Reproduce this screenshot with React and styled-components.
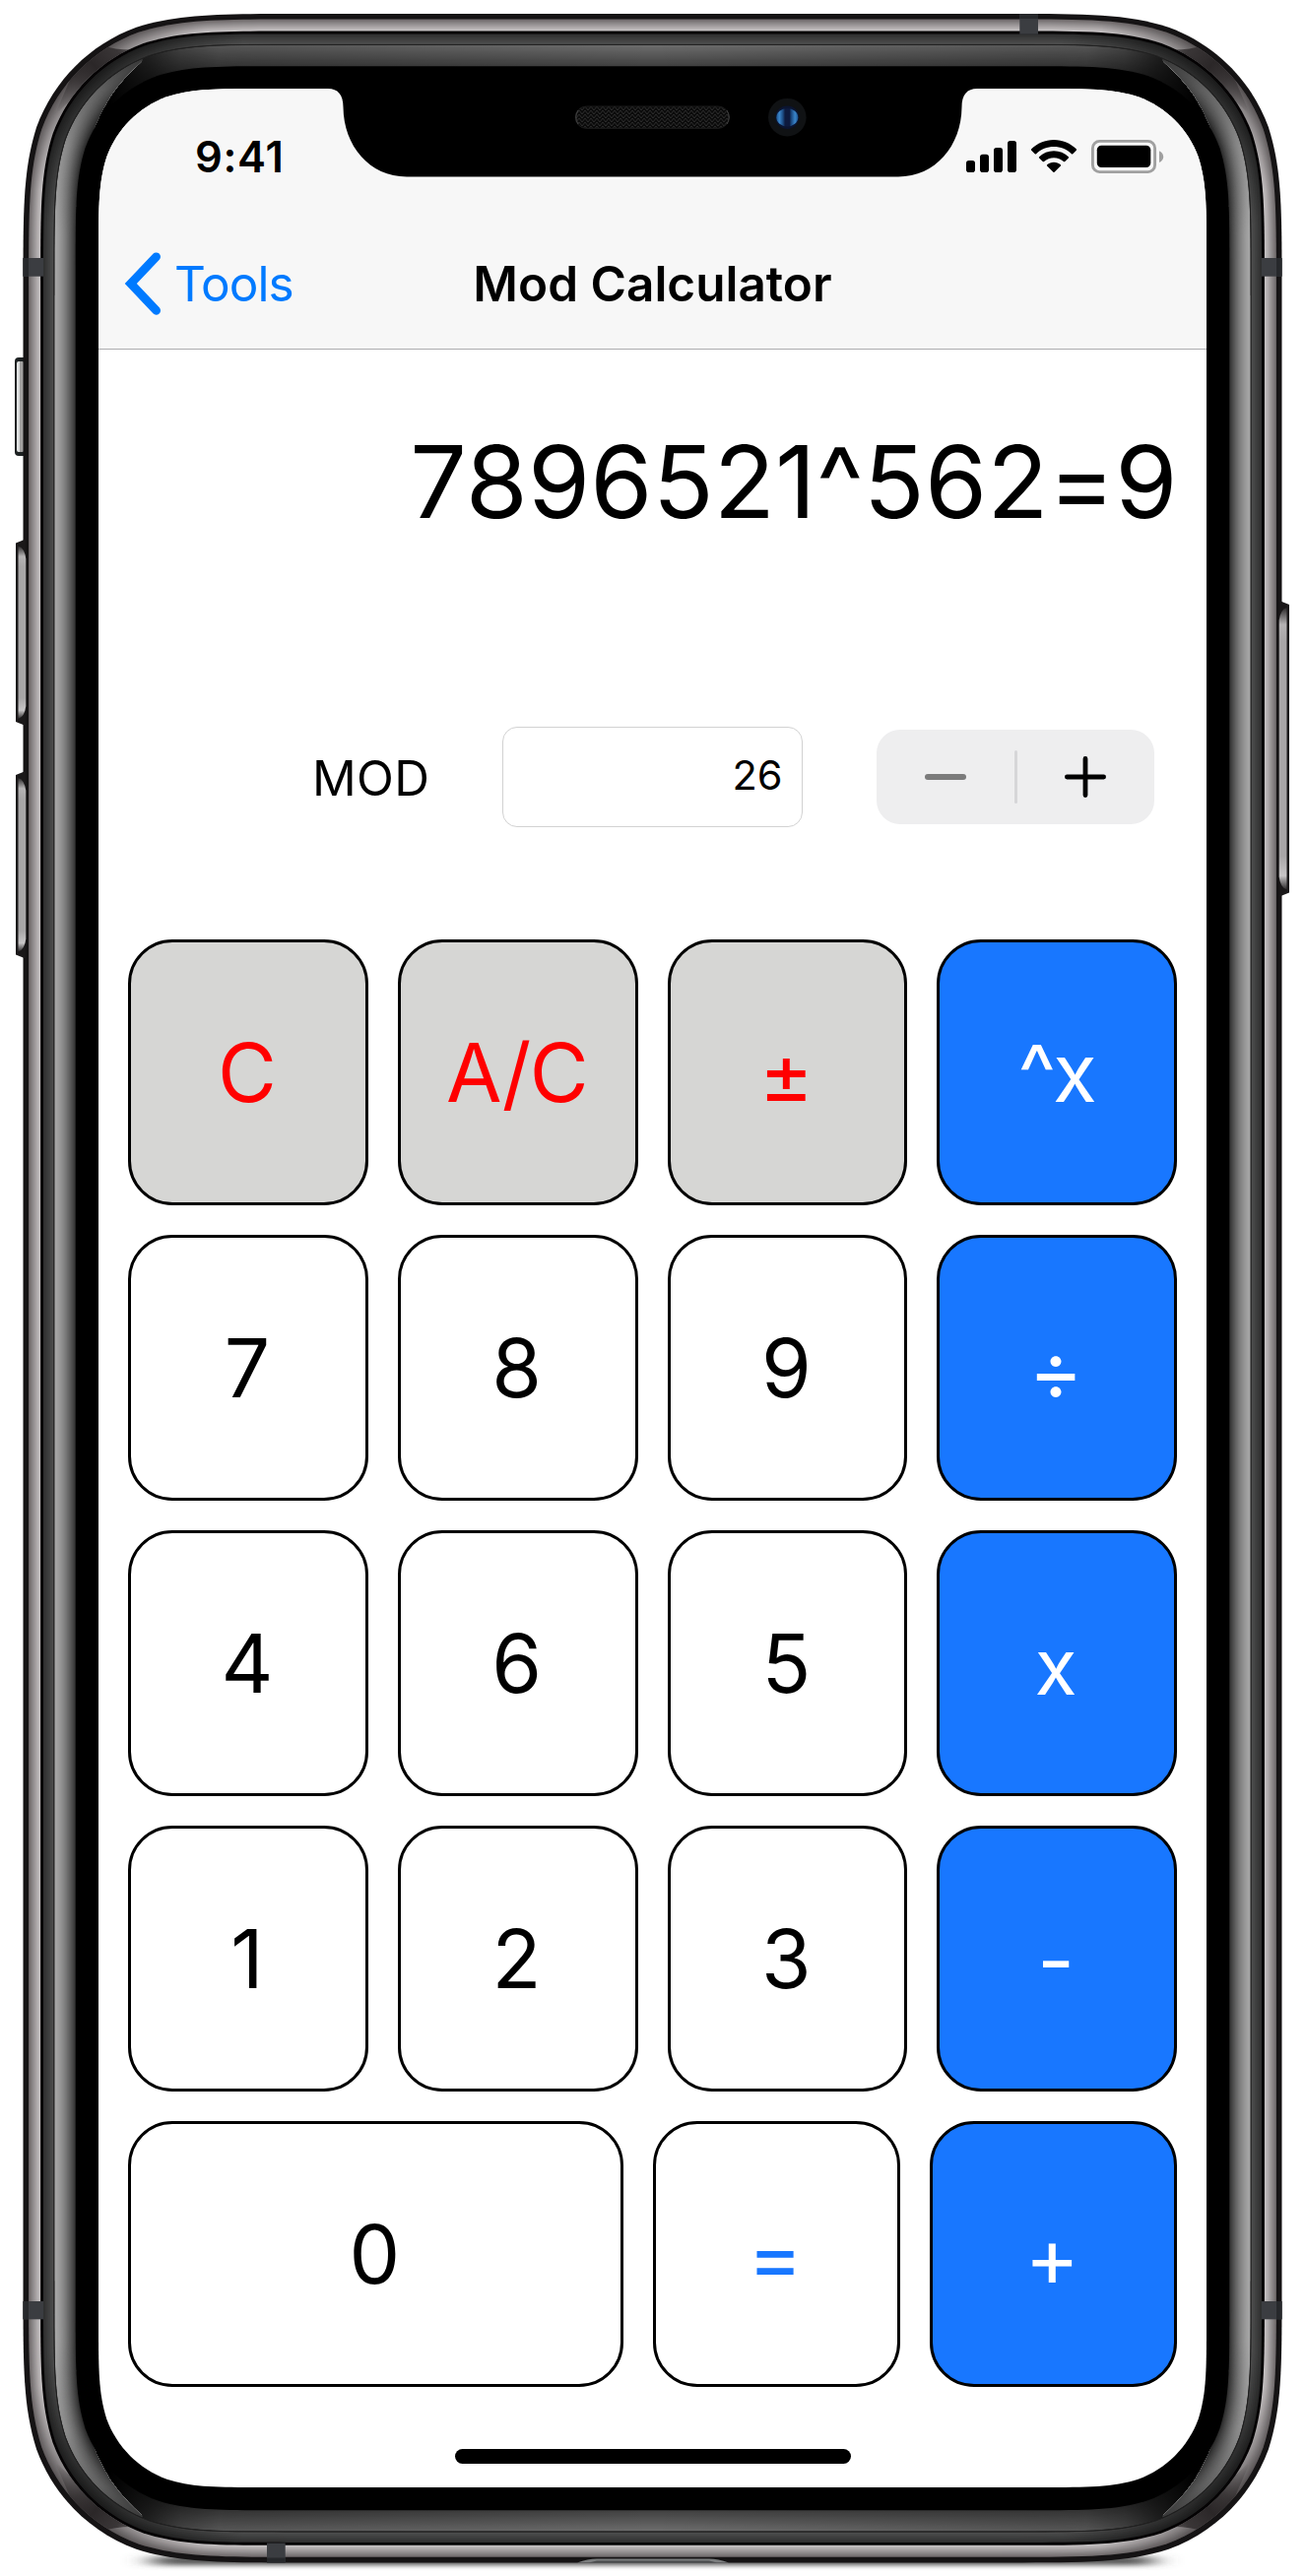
import React from "react";
import styled, { createGlobalStyle, css } from "styled-components";

const GlobalStyle = createGlobalStyle`
  html, body { margin: 0; padding: 0; background: #fff; }
  *, *::before, *::after { box-sizing: border-box; }
`;

/* ---------- device geometry ---------- */

// Rectangle with continuous (smoothed) corners.
const squircle = (x, y, w, h, r) => {
  const R = x + w;
  const B = y + h;
  const a = 1.52866 * r, b = 1.08849 * r, c = 0.86841 * r;
  const d = 0.63149 * r, e = 0.07491 * r, f = 0.37282 * r, g = 0.16906 * r;
  return [
    `M${x + a} ${y}`,
    `L${R - a} ${y}`,
    `C${R - b} ${y} ${R - c} ${y} ${R - d} ${y + e}`,
    `C${R - f} ${y + g} ${R - g} ${y + f} ${R - e} ${y + d}`,
    `C${R} ${y + c} ${R} ${y + b} ${R} ${y + a}`,
    `L${R} ${B - a}`,
    `C${R} ${B - b} ${R} ${B - c} ${R - e} ${B - d}`,
    `C${R - g} ${B - f} ${R - f} ${B - g} ${R - d} ${B - e}`,
    `C${R - c} ${B} ${R - b} ${B} ${R - a} ${B}`,
    `L${x + a} ${B}`,
    `C${x + b} ${B} ${x + c} ${B} ${x + d} ${B - e}`,
    `C${x + f} ${B - g} ${x + g} ${B - f} ${x + e} ${B - d}`,
    `C${x} ${B - c} ${x} ${B - b} ${x} ${B - a}`,
    `L${x} ${y + a}`,
    `C${x} ${y + b} ${x} ${y + c} ${x + e} ${y + d}`,
    `C${x + g} ${y + f} ${x + f} ${y + g} ${x + d} ${y + e}`,
    `C${x + c} ${y} ${x + b} ${y} ${x + a} ${y}Z`,
  ].join("");
};

const ring = (inset) =>
  squircle(23.5 + inset, 14 + inset, 1278 - 2 * inset, 2588.4 - 2 * inset, 182 - inset * 0.95);

const SCREEN_CLIP = squircle(0, 0, 1125, 2436, 110);

const mix = (from, to, t) =>
  `rgb(${from.map((v, i) => Math.round(v + (to[i] - v) * t)).join(",")})`;

// Concentric filled bands from one inset to another.
const bands = (from, to, steps, c1, c2, ease = 1) =>
  Array.from({ length: steps }, (_, i) => {
    const t = i / (steps - 1);
    return { inset: from + ((to - from) * i) / steps, fill: mix(c1, c2, Math.pow(t, ease)) };
  });

const METAL = bands(5.6, 17.6, 12, [112, 107, 108], [198, 194, 195]);
const BEVEL = bands(20.5, 31, 6, [48, 49, 49], [76, 76, 76]);
const SIDE = bands(31.8, 53.2, 22, [166, 166, 166], [52, 52, 52], 1.5);
const CAP = bands(31.8, 53.2, 16, [108, 108, 108], [66, 66, 66]);

const FrameSvg = styled.svg`
  position: absolute;
  inset: 0;
  display: block;
`;

const Rings = ({ list }) => list.map((b) => <path key={b.inset} d={ring(b.inset)} fill={b.fill} />);

const CORNERS = [
  "",
  "translate(1325 0) scale(-1 1)",
  "translate(0 2616.4) scale(1 -1)",
  "translate(1325 2616.4) scale(-1 -1)",
];

const SIDE_KEYS = [
  { y: 547.5, h: 189.5 },
  { y: 783, h: 190.5 },
];

const SideKey = ({ y, h }) => (
  <g>
    <path d={`M16 ${y + 4}L26 ${y}V${y + h}L16 ${y + h - 4}Z`} fill="#1a1819" />
    <path
      d={`M18.5 ${y + 7}Q25 ${y + 9} 26.3 ${y + 20}V${y + h - 20}Q25 ${y + h - 9} 18.5 ${y + h - 7}Z`}
      fill="url(#keyFace)"
    />
  </g>
);

const DeviceFrame = () => (
  <FrameSvg width="1325" height="2616" viewBox="0 0 1325 2616" aria-hidden="true">
    <defs>
      <linearGradient id="keyFace" x1="0" y1="0" x2="0" y2="1">
        <stop offset="0" stopColor="#2a2829" />
        <stop offset=".06" stopColor="#b5b3b4" />
        <stop offset=".12" stopColor="#a8a6a7" />
        <stop offset=".88" stopColor="#a8a6a7" />
        <stop offset=".95" stopColor="#c8c6c7" />
        <stop offset="1" stopColor="#2a2829" />
      </linearGradient>
      <linearGradient id="muteFace" x1="0" y1="0" x2="1" y2="0">
        <stop offset="0" stopColor="#e4e6e6" />
        <stop offset=".35" stopColor="#d8dada" />
        <stop offset=".45" stopColor="#a09e9e" />
        <stop offset="1" stopColor="#a3a1a1" />
      </linearGradient>
      <linearGradient id="sideFade" gradientUnits="userSpaceOnUse" x1="0" y1="55" x2="0" y2="240">
        <stop offset="0" stopColor="#000" stopOpacity=".7" />
        <stop offset=".2" stopColor="#000" stopOpacity=".4" />
        <stop offset=".5" stopColor="#000" stopOpacity=".15" />
        <stop offset="1" stopColor="#000" stopOpacity="0" />
      </linearGradient>
      <linearGradient id="capFade" gradientUnits="userSpaceOnUse" x1="112" y1="0" x2="662" y2="0">
        <stop offset="0" stopColor="#000" />
        <stop offset=".07" stopColor="#000" stopOpacity=".72" />
        <stop offset=".13" stopColor="#000" stopOpacity=".42" />
        <stop offset=".2" stopColor="#000" stopOpacity=".22" />
        <stop offset="1" stopColor="#000" stopOpacity="0" />
      </linearGradient>
      <radialGradient id="bevelFade" gradientUnits="userSpaceOnUse" cx="105" cy="88" r="150">
        <stop offset="0" stopColor="#000" stopOpacity=".45" />
        <stop offset=".4" stopColor="#000" stopOpacity=".35" />
        <stop offset="1" stopColor="#000" stopOpacity="0" />
      </radialGradient>
      <linearGradient id="metalPatch" gradientUnits="userSpaceOnUse" x1="58" y1="115" x2="142" y2="46">
        <stop offset="0" stopColor="#2b2728" stopOpacity="0" />
        <stop offset=".35" stopColor="#2b2728" stopOpacity=".75" />
        <stop offset=".55" stopColor="#2b2728" />
        <stop offset=".8" stopColor="#3a3637" />
        <stop offset="1" stopColor="#6b6768" />
      </linearGradient>
      <radialGradient id="metalShade" gradientUnits="userSpaceOnUse" cx="85" cy="72" r="130">
        <stop offset="0" stopColor="#3a3637" stopOpacity=".6" />
        <stop offset=".5" stopColor="#3a3637" stopOpacity=".3" />
        <stop offset="1" stopColor="#3a3637" stopOpacity="0" />
      </radialGradient>
      <clipPath id="sideClip">
        <path d="M0 0H150L144 62.500Q124 80 112 98Q97 122 88 152L77 210H260V2406.400H77L88 2464.400Q97 2494.400 112 2518.400Q124 2536.400 144 2553.900L150 2616H0Z" />
        <path d="M1325 0H1175L1181 62.500Q1201 80 1213 98Q1228 122 1237 152L1248 210H1065V2406.400H1248L1237 2464.400Q1228 2494.400 1213 2518.400Q1201 2536.400 1181 2553.900L1175 2616H1325Z" />
      </clipPath>
      <clipPath id="metalClip">
        <path d={ring(5.6) + ring(17.6)} clipRule="evenodd" />
      </clipPath>
      <clipPath id="bevelClip">
        <path d={ring(20.5) + ring(31.5)} clipRule="evenodd" />
      </clipPath>
      <clipPath id="innerClip">
        <path d={ring(31.5)} />
      </clipPath>
      <filter id="soft" x="-10%" y="-200%" width="120%" height="500%">
        <feGaussianBlur stdDeviation="14 2.4" />
      </filter>
      <pattern id="mesh" width="6" height="4" patternUnits="userSpaceOnUse">
        <rect width="6" height="4" fill="#0b0b0b" />
        <path d="M0 0L3 4L6 0" fill="none" stroke="#303030" strokeWidth=".9" />
      </pattern>
    </defs>

    <rect x="155" y="2596" width="1015" height="9" fill="#555" filter="url(#soft)" />

    <rect x="15" y="363" width="14" height="100" rx="4" fill="#1d2122" />
    <rect x="17" y="367" width="7.5" height="92" rx="2" fill="url(#muteFace)" />

    <path d={ring(0)} fill="#151314" />
    <Rings list={METAL} />
    <g clipPath="url(#metalClip)">
      {CORNERS.map((t) => (
        <g key={t} transform={t}>
          <rect width="240" height="240" fill="url(#metalShade)" />
          <path d="M55 118L78 65L104 46Q120 52 146 50Q112 66 88 88Q68 104 55 118Z" fill="url(#metalPatch)" />
        </g>
      ))}
    </g>
    <path d={ring(17.6)} fill="#050304" />
    <Rings list={BEVEL} />
    <g clipPath="url(#bevelClip)">
      {CORNERS.map((t) => (
        <rect key={t} transform={t} width="280" height="280" fill="url(#bevelFade)" />
      ))}
    </g>
    <path d={ring(31)} fill="#1c1c1c" />

    <g clipPath="url(#innerClip)">
      <Rings list={CAP} />
      {CORNERS.map((t) => (
        <g key={t} transform={t}>
          <rect x="112" y="40" width="551" height="70" fill="url(#capFade)" />
          <rect x="50" y="40" width="62.5" height="260" fill="#000" />
        </g>
      ))}
      <g clipPath="url(#sideClip)">
        <Rings list={SIDE} />
        {CORNERS.map((t) => (
          <rect key={t} transform={t} x="50" y="40" width="110" height="200" fill="url(#sideFade)" />
        ))}
      </g>
    </g>
    <path d={ring(31.4)} fill="none" stroke="#222" strokeWidth=".9" />
    <path d={ring(53.2)} fill="#000" />

    <g fill="#3b3d41">
      <rect x="23.5" y="262" width="20.5" height="18.7" />
      <rect x="1281" y="262" width="20.5" height="18.7" />
      <rect x="23.5" y="2337" width="20.5" height="18.3" />
      <rect x="1281" y="2337" width="20.5" height="18.3" />
      <rect x="1035.3" y="14" width="18.7" height="20.7" />
      <rect x="271" y="2582.5" width="18.7" height="20" />
    </g>
    <g fill="#26282b">
      <rect x="23.5" y="262" width="5.5" height="18.7" />
      <rect x="1296" y="262" width="5.5" height="18.7" />
      <rect x="23.5" y="2337" width="5.5" height="18.3" />
      <rect x="1296" y="2337" width="5.5" height="18.3" />
      <rect x="1035.3" y="14" width="18.7" height="5" />
      <rect x="271" y="2597.5" width="18.7" height="5" />
    </g>

    {SIDE_KEYS.map((k) => (
      <SideKey key={k.y} {...k} />
    ))}
    <g transform="translate(1325 0) scale(-1 1)">
      <SideKey y={610} h={300.6} />
    </g>

    <path d="M586 2602.4Q597 2598.6 606 2598.6H720Q729 2598.6 740 2602.4Z" fill="#7b7d7e" />
    <path d="M598 2602.4L606 2600.6H720L728 2602.4Z" fill="#4a4c4d" />
  </FrameSvg>
);

const NotchSvg = styled.svg`
  position: absolute;
  top: 0;
  left: 225px;
  display: block;
`;

const Notch = () => (
  <NotchSvg width="675" height="91" viewBox="325 90 675 91" aria-hidden="true">
    <defs>
      <linearGradient id="lens" x1="0" y1="0" x2="1" y2="0">
        <stop offset="0" stopColor="#1d5690" />
        <stop offset=".14" stopColor="#3a84c8" />
        <stop offset=".3" stopColor="#1c4c84" />
        <stop offset=".4" stopColor="#0d1a3e" />
        <stop offset=".6" stopColor="#0d1a3e" />
        <stop offset=".7" stopColor="#1c4c84" />
        <stop offset=".86" stopColor="#3a84c8" />
        <stop offset="1" stopColor="#1d5690" />
      </linearGradient>
    </defs>
    <path
      d="M325 89H333V90C343 90 348.5 96 348.5 109C349 148 375 179.4 413 179.4H912C950 179.4 976 148 976.5 109C976.5 96 982 90 992 90V89Z"
      fill="#000"
    />
    <rect x="584.2" y="108" width="156" height="22.4" rx="11.2" fill="url(#mesh)" stroke="#1a1a1a" />
    <path d="M587 112Q582.500 119 587 126M738 112Q742.500 119 738 126" fill="none" stroke="#4a4a4a" strokeWidth=".9" />
    <circle cx="799.3" cy="119.2" r="19.3" fill="#101214" />
    <circle cx="799.3" cy="119.2" r="11.8" fill="#0b1430" />
    <ellipse cx="799.3" cy="119.2" rx="11" ry="9.2" fill="url(#lens)" />
  </NotchSvg>
);

/* ---------- app ---------- */

const Device = styled.div`
  position: relative;
  width: 1325px;
  height: 2616px;
  padding: 90px 100px;
  overflow: hidden;
  font-family: Inter, "Liberation Sans", sans-serif;
  color: #000;
`;

const Screen = styled.main`
  position: relative;
  width: 1125px;
  height: 2436px;
  display: flex;
  flex-direction: column;
  background: #fff;
  clip-path: path("${SCREEN_CLIP}");
`;

const Header = styled.header`
  height: 264.5px;
  flex: none;
  background: #f7f7f7;
  border-bottom: 1px solid #adadaf;
`;

const StatusBar = styled.div`
  height: 132px;
  display: flex;
  justify-content: space-between;
  align-items: flex-start;
  padding: 51px 43px 0 98px;
`;

const Clock = styled.span`
  padding-top: 1px;
  font-size: 43.5px;
  line-height: 34px;
  font-weight: 600;
  letter-spacing: 0.7px;
`;

const StatusIcons = styled.svg`
  display: block;
`;

const NavBar = styled.nav`
  height: 132px;
  display: grid;
  grid-template-columns: 1fr auto 1fr;
  align-items: center;
  padding: 0 26px;
`;

const BackLink = styled.a`
  display: flex;
  align-items: center;
  gap: 13px;
  color: #007aff;
  font-size: 49.5px;
  line-height: 60px;
  letter-spacing: -1px;
`;

const Title = styled.h1`
  margin: 0;
  font-size: 49.5px;
  line-height: 60px;
  font-weight: 600;
  letter-spacing: 0;
`;

const Display = styled.output`
  display: block;
  height: 124px;
  margin-top: 72px;
  padding-right: 29.5px;
  text-align: right;
  font-size: 102px;
  line-height: 124px;
  letter-spacing: 0.1px;
  white-space: nowrap;
`;

const ModRow = styled.div`
  display: flex;
  align-items: center;
  height: 102px;
  margin: 187.5px 53px 0 217px;
`;

const ModLabel = styled.label`
  width: 193px;
  padding-top: 2px;
  font-size: 49.5px;
  letter-spacing: 0.3px;
`;

const ModField = styled.div`
  width: 305px;
  height: 102px;
  border: 1.4px solid #d2d2d2;
  border-radius: 15px;
  padding-right: 19.5px;
  text-align: right;
  font-size: 41.5px;
  line-height: 97px;
`;

const Stepper = styled.div`
  display: flex;
  align-items: center;
  width: 282px;
  height: 96px;
  margin-left: auto;
  border-radius: 24px;
  background: #eeeeef;
`;

const StepButton = styled.button`
  flex: 1;
  height: 100%;
  display: flex;
  align-items: center;
  justify-content: center;
  padding: 0;
  border: 0;
  background: none;
  color: ${(p) => (p.$muted ? "#7b7b7b" : "#000")};
`;

const StepDivider = styled.span`
  width: 3px;
  height: 54px;
  border-radius: 1.5px;
  background: #d6d6d8;
`;

const Keypad = styled.div`
  display: flex;
  flex-direction: column;
  gap: 30px;
  margin: 114px 30px 0;
`;

const KeyRow = styled.div`
  display: grid;
  grid-template-columns: ${(p) => p.$columns};
  gap: 30px;
`;

const tones = {
  digit: css`background: #fff; color: #000;`,
  clear: css`background: #d6d6d4; color: #ff0000;`,
  operator: css`background: #1877ff; color: #fff;`,
  equals: css`background: #fff; color: #1877ff;`,
};

const Key = styled.button`
  min-width: 0;
  height: 270px;
  display: flex;
  align-items: center;
  justify-content: center;
  padding: 0 2px 0 0;
  border: 3px solid #000;
  border-radius: 45px;
  font-family: inherit;
  font-size: 82px;
  line-height: 100px;
  ${(p) => tones[p.$tone]}
`;

const Glyph = styled.span`
  font-size: ${(p) => p.$size || 82}px;
  letter-spacing: ${(p) => p.$tracking || 0}px;
  transform: translateY(${(p) => p.$shift || 1}px);
`;

const HomeIndicator = styled.div`
  width: 402px;
  height: 15px;
  margin: 63px auto 0;
  border-radius: 7.5px;
  background: #000;
`;

const FOUR = "repeat(4, 1fr)";

const ROWS = [
  {
    columns: FOUR,
    keys: [
      { label: "C", tone: "clear" },
      { label: "A/C", tone: "clear", tracking: -1.5 },
      { label: "±", tone: "clear", size: 84, shift: 2 },
      { label: "^x", tone: "operator", tracking: -3 },
    ],
  },
  {
    columns: FOUR,
    keys: [
      { label: "7", tone: "digit" },
      { label: "8", tone: "digit" },
      { label: "9", tone: "digit" },
      { label: "÷", tone: "operator", size: 84, shift: 3 },
    ],
  },
  {
    columns: FOUR,
    keys: [
      { label: "4", tone: "digit" },
      { label: "6", tone: "digit" },
      { label: "5", tone: "digit" },
      { label: "x", tone: "operator", size: 79, shift: 3 },
    ],
  },
  {
    columns: FOUR,
    keys: [
      { label: "1", tone: "digit" },
      { label: "2", tone: "digit" },
      { label: "3", tone: "digit" },
      { label: "-", tone: "operator", shift: 2 },
    ],
  },
  {
    columns: "2fr 1fr 1fr",
    keys: [
      { label: "0", tone: "digit" },
      { label: "=", tone: "equals", size: 84, shift: 3 },
      { label: "+", tone: "operator", size: 84, shift: 3 },
    ],
  },
];

export default function App() {
  return (
    <>
      <GlobalStyle />
      <Device>
        <DeviceFrame />
        <Screen>
          <Header>
            <StatusBar>
              <Clock>9:41</Clock>
              <StatusIcons width="202" height="36" viewBox="980 141 202 36" aria-hidden="true">
                <rect x="981" y="163" width="9" height="12" rx="2.8" />
                <rect x="995" y="156.7" width="9" height="18.3" rx="2.8" />
                <rect x="1009" y="150" width="9" height="25" rx="2.8" />
                <rect x="1023" y="143" width="9" height="32" rx="2.8" />
                <path d="M1070 142C1079 142 1086.800 145.500 1092.800 151.300Q1093.400 152 1092.800 152.700L1089.300 156.200Q1088.600 156.800 1087.900 156.200C1083 151.500 1076.800 149 1070 149C1063.200 149 1057 151.500 1052.100 156.200Q1051.400 156.800 1050.700 156.200L1047.200 152.700Q1046.600 152 1047.200 151.300C1053.200 145.500 1061 142 1070 142Z" />
                <path d="M1070 153.200C1075.800 153.200 1081 155.400 1084.900 159.200Q1085.500 159.900 1084.900 160.500L1081.300 164Q1080.600 164.600 1079.900 164C1077.200 161.600 1073.800 160.200 1070 160.200C1066.200 160.200 1062.800 161.600 1060.100 164Q1059.400 164.600 1058.700 164L1055.100 160.500Q1054.500 159.900 1055.100 159.200C1059 155.400 1064.200 153.200 1070 153.200Z" />
                <path d="M1070 164.700C1072.700 164.700 1075 165.600 1076.900 167.200Q1077.500 167.900 1076.900 168.500L1070.600 174.700Q1070 175.200 1069.400 174.700L1063.100 168.500Q1062.500 167.900 1063.100 167.200C1065 165.600 1067.300 164.700 1070 164.700Z" />
                <rect x="1109.400" y="143.400" width="63.200" height="31.200" rx="7" fill="none" stroke="#a0a0a0" strokeWidth="2.900" />
                <rect x="1113.800" y="147.800" width="54.500" height="22.200" rx="4.500" />
                <path d="M1177 153.300Q1181.200 155.500 1181.200 159.200Q1181.200 162.900 1177 165Z" fill="#a0a0a0" />
              </StatusIcons>
            </StatusBar>
            <NavBar>
              <BackLink>
                <svg width="38" height="64" viewBox="126 256.500 38 64" fill="none" aria-hidden="true">
                  <path d="M158.600 261.300L132.800 288.500L158.600 315.800" stroke="currentColor" strokeWidth="8.800" strokeLinecap="round" />
                </svg>
                <span>Tools</span>
              </BackLink>
              <Title>Mod Calculator</Title>
            </NavBar>
          </Header>
          <Display>7896521^562=9</Display>
          <ModRow>
            <ModLabel>MOD</ModLabel>
            <ModField>26</ModField>
            <Stepper>
              <StepButton $muted aria-label="Decrease">
                <svg width="44" height="44" viewBox="0 0 44 44" fill="none" stroke="currentColor" strokeWidth="6" strokeLinecap="round">
                  <path d="M4 22H40" />
                </svg>
              </StepButton>
              <StepDivider />
              <StepButton aria-label="Increase">
                <svg width="44" height="44" viewBox="0 0 44 44" fill="none" stroke="currentColor" strokeWidth="4.800" strokeLinecap="round">
                  <path d="M3.400 22H40.600M22 3.400V40.600" />
                </svg>
              </StepButton>
            </Stepper>
          </ModRow>
          <Keypad>
            {ROWS.map((row, i) => (
              <KeyRow key={i} $columns={row.columns}>
                {row.keys.map((k) => (
                  <Key key={k.label} $tone={k.tone}>
                    <Glyph $size={k.size} $shift={k.shift} $tracking={k.tracking}>{k.label}</Glyph>
                  </Key>
                ))}
              </KeyRow>
            ))}
          </Keypad>
          <HomeIndicator />
          <Notch />
        </Screen>
      </Device>
    </>
  );
}
